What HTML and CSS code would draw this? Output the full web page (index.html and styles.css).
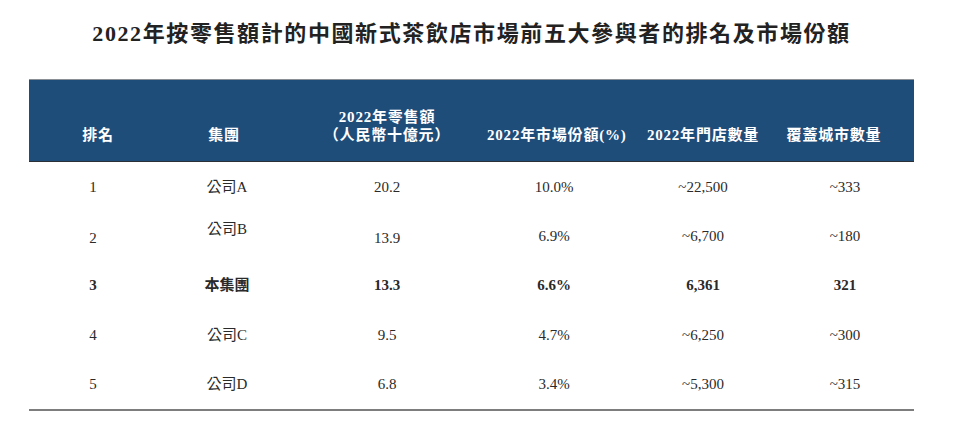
FILE: index.html
```html
<!DOCTYPE html>
<html lang="zh-Hant">
<head>
<meta charset="utf-8">
<title>市場排名</title>
<link rel="stylesheet" href="styles.css">
</head>
<body>
<main class="page">
  <h1 class="title">2022年按零售額計的中國新式茶飲店市場前五大參與者的排名及市場份額</h1>
  <section class="table">
    <div class="row head">
      <div class="cell">排名</div>
      <div class="cell">集團</div>
      <div class="cell">2022年零售額<br>（人民幣十億元）</div>
      <div class="cell">2022年市場份額(%)</div>
      <div class="cell">2022年門店數量</div>
      <div class="cell">覆蓋城市數量</div>
    </div>
    <div class="row">
      <div class="cell">1</div>
      <div class="cell">公司A</div>
      <div class="cell">20.2</div>
      <div class="cell">10.0%</div>
      <div class="cell">~22,500</div>
      <div class="cell">~333</div>
    </div>
    <div class="row">
      <div class="cell low">2</div>
      <div class="cell raised">公司B</div>
      <div class="cell low">13.9</div>
      <div class="cell">6.9%</div>
      <div class="cell">~6,700</div>
      <div class="cell">~180</div>
    </div>
    <div class="row bold">
      <div class="cell">3</div>
      <div class="cell">本集團</div>
      <div class="cell">13.3</div>
      <div class="cell">6.6%</div>
      <div class="cell">6,361</div>
      <div class="cell">321</div>
    </div>
    <div class="row">
      <div class="cell">4</div>
      <div class="cell">公司C</div>
      <div class="cell">9.5</div>
      <div class="cell">4.7%</div>
      <div class="cell">~6,250</div>
      <div class="cell">~300</div>
    </div>
    <div class="row">
      <div class="cell">5</div>
      <div class="cell">公司D</div>
      <div class="cell">6.8</div>
      <div class="cell">3.4%</div>
      <div class="cell">~5,300</div>
      <div class="cell">~315</div>
    </div>
  </section>
</main>
</body>
</html>
```

FILE: styles.css
```css
html, body {
  margin: 0;
  padding: 0;
  background: #ffffff;
}

body {
  font-family: "Liberation Serif", "Noto Sans CJK TC", serif;
  color: #2a2a2a;
}

.page {
  width: 885px;
  margin-left: 29px;
  padding-top: 19px;
}

.title {
  margin: 0 0 30px 0;
  font-size: 22px;
  line-height: 30px;
  font-weight: 700;
  letter-spacing: 1.6px;
  text-align: center;
  color: #222222;
}

.table {
  display: flex;
  flex-direction: column;
  border-bottom: 2px solid #7d7d7d;
}

.row {
  display: grid;
  grid-template-columns: 132px 126px 200px 134px 164px 110px;
  padding-right: 19px;
  height: 49.4px;
  align-items: center;
  font-size: 15px;
  line-height: 18px;
}

.row.head {
  height: auto;
  align-items: end;
  background: #1f4d7a;
  border-top: 1px solid #8a8f96;
  border-bottom: 1px solid #2b2f36;
  padding-top: 28px;
  padding-bottom: 17px;
  color: #ffffff;
  font-weight: 700;
  letter-spacing: 0.8px;
}

.cell {
  text-align: center;
  white-space: nowrap;
}

.row .cell:nth-child(1) { padding-right: 4px; }
.row .cell:nth-child(2) { padding-left: 6px; }
.row .cell:nth-child(6) { padding-left: 10px; }

.row.head .cell:nth-child(1) { padding-right: 0; padding-left: 6px; }
.row.head .cell:nth-child(2) { padding-left: 0; }
.row.head .cell:nth-child(4) { padding-left: 0; padding-right: 16px; }
.row.head .cell:nth-child(6) { padding-left: 0; padding-right: 12px; }

.row.bold {
  font-weight: 700;
}

.cell.raised {
  padding-bottom: 14px;
}

.cell.low {
  padding-top: 3px;
}
```
